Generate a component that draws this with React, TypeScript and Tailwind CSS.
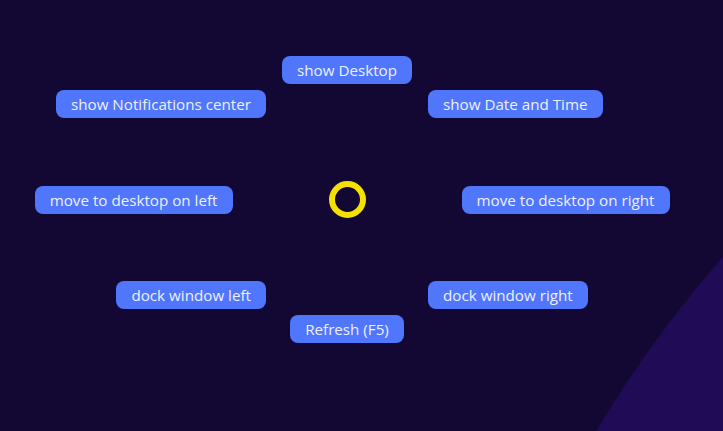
import React from 'react';

const btn =
  "h-7 rounded-lg bg-[#4f76fb] px-[15px] text-[15.2px] leading-7 whitespace-nowrap text-[#eef0ff] font-['Open_Sans',sans-serif]";

function Pill({ label }: { label: string }) {
  return <div className={btn}>{label}</div>;
}

export default function App() {
  return (
    <div className="relative h-[431px] w-[723px] overflow-hidden bg-[#130733]">
      {/* lighter disc in the bottom right corner */}
      <div className="absolute left-[426px] top-[-154px] h-[2400px] w-[2400px] rounded-full border border-[#170a3d] bg-gradient-to-br from-[#200c58] to-[#1c0a4c]" />

      <div className="relative flex w-[694px] flex-col pt-[56px]">
        <div className="flex justify-center">
          <Pill label="show Desktop" />
        </div>

        <div className="mt-[6px] grid grid-cols-2 gap-x-[162px]">
          <div className="flex justify-end">
            <Pill label="show Notifications center" />
          </div>
          <div className="flex justify-start">
            <Pill label="show Date and Time" />
          </div>
        </div>

        <div className="mt-[63px] grid grid-cols-[1fr_auto_1fr] items-center">
          <div className="flex justify-end pr-[96px]">
            <Pill label="move to desktop on left" />
          </div>
          <div className="h-[37px] w-[37px] rounded-full border-[6px] border-[#f5e100]" />
          <div className="flex justify-start pl-[96px]">
            <Pill label="move to desktop on right" />
          </div>
        </div>

        <div className="mt-[63px] grid grid-cols-2 gap-x-[162px]">
          <div className="flex justify-end">
            <Pill label="dock window left" />
          </div>
          <div className="flex justify-start">
            <Pill label="dock window right" />
          </div>
        </div>

        <div className="mt-[6px] flex justify-center">
          <Pill label="Refresh (F5)" />
        </div>
      </div>
    </div>
  );
}
